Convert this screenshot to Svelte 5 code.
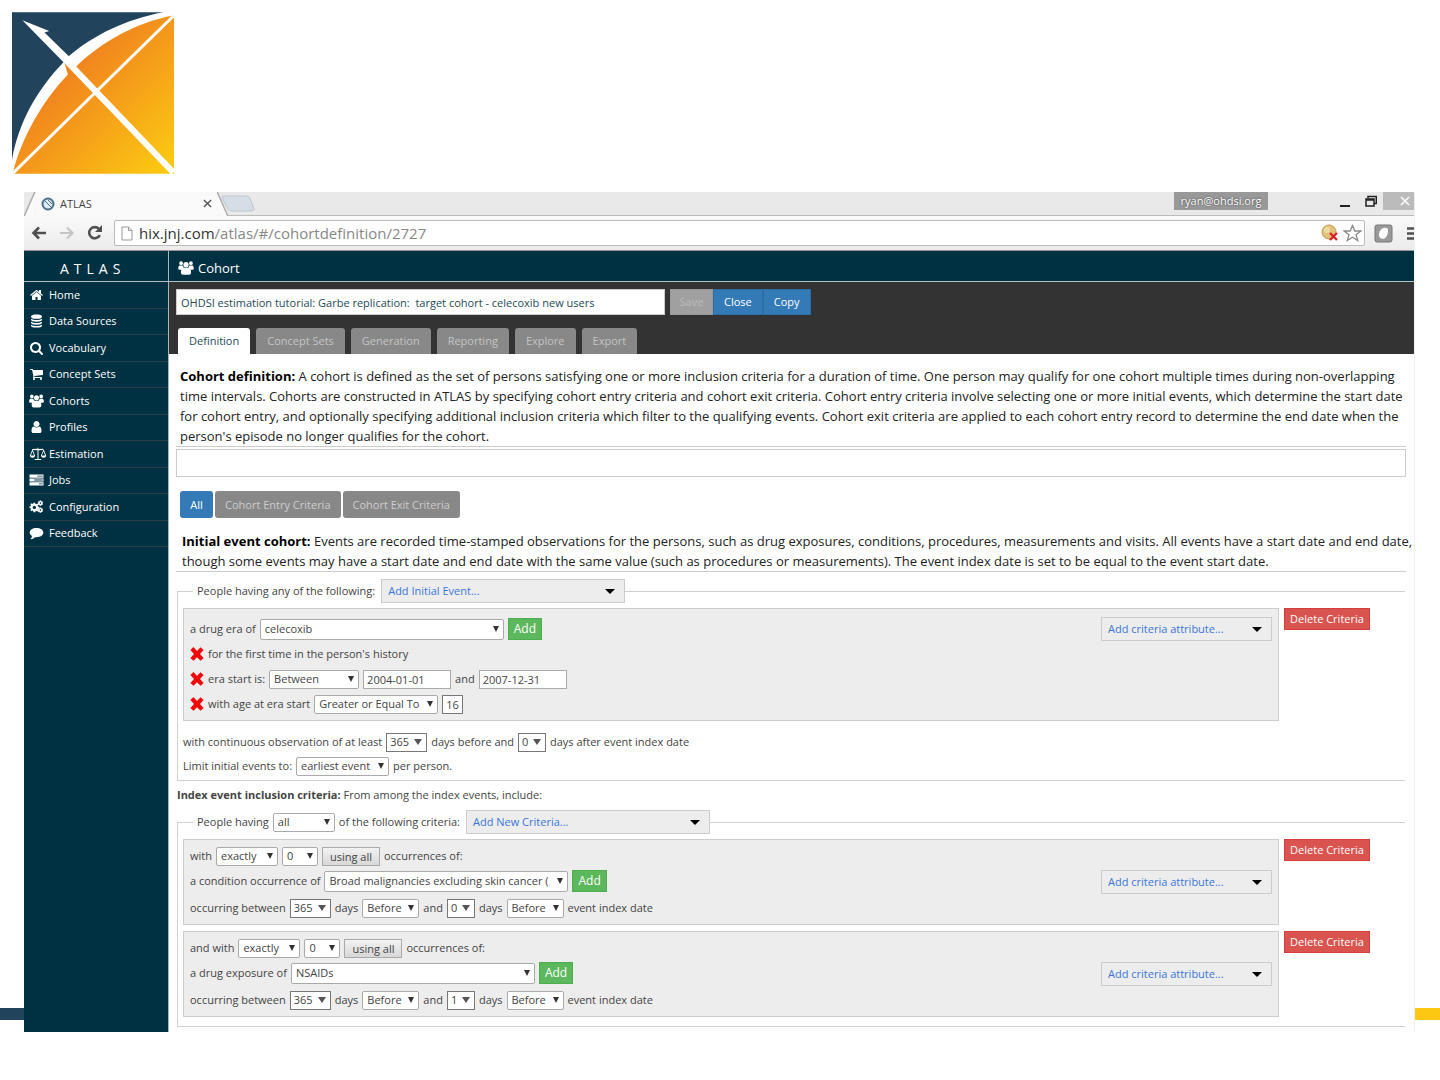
<script>
  const groupIcon =
    'M1.200 2.500a2.200 2.200 0 1 1 4.400 0 2.200 2.200 0 0 1-4.400 0zM12.400 2.500a2.200 2.200 0 1 1 4.400 0 2.200 2.200 0 0 1-4.400 0zM6 4.200a3 3 0 1 1 6 0 3 3 0 0 1-6 0zM1.500 5.200H5L6.400 7.600H11.600L13 5.200H16.500Q17.900 6 17.900 8.500 17.900 10 16.500 10H14.400Q14.800 11.500 14.800 13 14.800 15.800 12.400 15.800H5.600Q3.200 15.800 3.200 13 3.200 11.500 3.600 10H1.500Q.1 10 .1 8.500.1 6 1.500 5.200z';

  const menu = [
    { label: 'Home', box: '0 0 1792 1792', d: 'M1472 992v480q0 26-19 45t-45 19h-384v-384h-256v384h-384q-26 0-45-19t-19-45v-480q0-1 .5-3t.5-3l575-474 575 474q1 2 1 6zm223-69l-62 74q-8 9-21 11h-3q-13 0-21-7l-692-577-692 577q-12 8-24 7-13-2-21-11l-62-74q-8-10-7-23.500t11-21.500l719-599q32-26 76-26t76 26l244 204v-195q0-14 9-23t23-9h192q14 0 23 9t9 23v408l219 182q10 8 11 21.500t-7 23.500z' },
    { label: 'Data Sources', box: '0 0 18 18', d: 'M2 3.500C2 1.500 5 .8 9 .8s7 .7 7 2.700-3 2.700-7 2.700-7-.7-7-2.700zM2 6q2 1.600 7 1.600T16 6v1.500q0 2.500-7 2.500T2 7.500zM2 10q2 1.600 7 1.600t7-1.600v1.300q0 2.500-7 2.500t-7-2.500zM2 13.800q2 1.600 7 1.600t7-1.600v1.200q0 2.500-7 2.500T2 15z' },
    { label: 'Vocabulary', box: '0 0 1792 1792', d: 'M1216 832q0-185-131.500-316.500t-316.500-131.500-316.500 131.500-131.500 316.500 131.500 316.500 316.500 131.500 316.500-131.500 131.500-316.500zm512 832q0 52-38 90t-90 38q-54 0-90-38l-343-342q-179 124-399 124-143 0-273.500-55.500t-225-150-150-225-55.500-273.500 55.500-273.500 150-225 225-150 273.500-55.500 273.500 55.500 225 150 150 225 55.500 273.500q0 220-124 399l343 343q37 37 37 90z' },
    { label: 'Concept Sets', box: '0 0 1792 1792', d: 'M704 1536q0 52-38 90t-90 38-90-38-38-90 38-90 90-38 90 38 38 90zm896 0q0 52-38 90t-90 38-90-38-38-90 38-90 90-38 90 38 38 90zm128-1088v512q0 24-16.500 42.500t-40.500 21.500l-1044 122q13 60 13 70 0 16-24 64h920q26 0 45 19t19 45-19 45-45 19h-1024q-26 0-45-19t-19-45q0-11 8-31.500t16-36 21.500-40 15.500-29.500l-177-823h-204q-26 0-45-19t-19-45 19-45 45-19h256q16 0 28.500 6.500t19.500 15.500 13 24.500 8 26 5.500 29.500 4.500 26h1201q26 0 45 19t19 45z' },
    { label: 'Cohorts', box: '0 0 18 16', d: groupIcon },
    { label: 'Profiles', box: '0 0 1792 1792', d: 'M1536 1399q0 109-62.500 187t-150.500 78h-854q-88 0-150.500-78t-62.500-187q0-85 8.500-160.500t31.500-152 58.500-131 94-89 134.500-34.500q131 128 313 128t313-128q76 0 134.500 34.500t94 89 58.500 131 31.500 152 8.500 160.500zm-256-887q0 159-112.500 271.500t-271.500 112.500-271.500-112.500-112.500-271.500 112.500-271.500 271.500-112.500 271.500 112.500 112.500 271.500z' },
    { label: 'Estimation', box: '0 0 20 17', wide: true, d: 'M9.500 1h1v1.300L16 2v1L17 3l3 7.500q-.4 2.500-3.200 2.500t-3.200-2.500L16.400 3.500 10.600 3.800V14.500H14v1.200H6v-1.200h3.400V3.800L3.800 3.500l2.700 7Q6.100 13 3.300 13T.1 10.500L3 3.400V2.400l6.500-.2zM3.300 5.200L1.300 10.300h4zM16.700 5.200l-2 5.100h4z' },
    { label: 'Jobs', box: '0 0 18 18', d: 'M0 2h18v4H0zM10 3.500v1h7v-1zM0 7h18v4H0zM6 8.500v1h11v-1zM0 12h18v4H0zM12 13.500v1h5v-1z' },
    { label: 'Configuration', box: '0 0 18 18', d: 'M5.200 3.500h2l.4 1.500 1 .4 1.400-.8 1.300 1.300-.8 1.400.4 1 1.500.4v2l-1.500.4-.4 1 .8 1.300-1.300 1.400-1.400-.8-1 .4-.4 1.500h-2L4.800 14l-1-.4-1.400.8L1.100 13l.8-1.300-.4-1L0 10.300v-2l1.500-.4.4-1-.8-1.400L2.400 4.200l1.400.8 1-.4zM6.200 7.300a2.200 2.200 0 1 0 0 4.400 2.200 2.200 0 0 0 0-4.400zM14 .5l1 .2.3 1.200 1.200-.2.8 1.300-.7 1 .7 1-.8 1.400-1.200-.3-.3 1.200h-2l-.3-1.200-1.200.3L10.700 5l.7-1-.7-1 .8-1.300 1.200.2.300-1.200zM14 3a1 1 0 1 0 0 2 1 1 0 0 0 0-2zM14 9.500l1 .2.3 1.200 1.200-.2.8 1.300-.7 1 .7 1-.8 1.400-1.200-.3-.3 1.200h-2l-.3-1.200-1.200.3-.8-1.400.7-1-.7-1 .8-1.300 1.200.2.300-1.200zM14 12a1 1 0 1 0 0 2 1 1 0 0 0 0-2z' },
    { label: 'Feedback', box: '0 0 18 18', d: 'M9 2.500c5 0 8.800 2.600 8.800 6s-3.800 6-8.800 6q-1 0-1.800-.1Q4.700 16.800 1.800 17q-.6-.3-.1-.8Q3 15 3.200 13 .2 11.300.2 8.500c0-3.400 3.800-6 8.800-6z' },
  ];

  const tabs = ['Definition', 'Concept Sets', 'Generation', 'Reporting', 'Explore', 'Export'];

  const criteria = [
    { lead: 'with', count: '0', kind: 'a condition occurrence of', concept: 'Broad malignancies excluding skin cancer (', from: '365', to: '0' },
    { lead: 'and with', count: '0', kind: 'a drug exposure of', concept: 'NSAIDs', from: '365', to: '1' },
  ];
</script>

{#snippet pick(value, label, size, variant = '')}
  <span class="pick {size} {variant}">
    <select aria-label={label}><option>{value}</option></select>
  </span>
{/snippet}

{#snippet adder(text, size)}
  <button class="adder {size}" aria-haspopup="menu"><span>{text}</span><i class="caret"></i></button>
{/snippet}

{#snippet cross(name)}
  <button class="remove" aria-label={name}>
    <svg viewBox="0 0 14 14"><path d="M3.500 0L7 4 10.500.3 13.600 3 10 7l3.600 4-3 2.700L7 10.200 3.500 13.800.4 11 4 7 .4 3z" /></svg>
  </button>
{/snippet}

<div class="slide">
  <header class="brand">
    <svg class="logo" viewBox="36 38 484 483" role="img" aria-label="OHDSI">
      <defs>
        <linearGradient id="sun" gradientUnits="userSpaceOnUse" x1="190" y1="190" x2="500" y2="500">
          <stop offset="0" stop-color="#f0801f" />
          <stop offset="1" stop-color="#fcc812" />
        </linearGradient>
      </defs>
      <path fill="#21435c" d="M36 38H488C380 58 280 105 205 170L190 188C110 270 55 370 36 480z" />
      <path fill="url(#sun)" d="M38 520C65 410 130 300 203 224L192 188 228 200C300 130 400 70 520 47V521H38z" />
      <path stroke="#fff" stroke-width="9" d="M36 522L522 46" />
      <path fill="#fff" d="M67 62L147 94 133 99 206 170 228 200 524 510 512 524 190 188z" />
    </svg>
  </header>

  <div class="stage">
    <div class="bar navy"></div>

    <div class="window">
      <div class="tabstrip">
        <svg class="slope" viewBox="0 0 12 25"><path class="face" d="M0 25L11 0H12V25z" /><path class="edge" d="M0 25L11 0" /></svg>
        <div class="page-tab">
          <svg class="favicon" viewBox="0 0 14 14"><circle cx="7" cy="7" r="5.500" fill="#dfe9f0" stroke="#48708c" stroke-width="2" /><path d="M3 3l8 8M7 3l4 4" stroke="#48708c" /></svg>
          <span>ATLAS</span>
          <button class="plain" aria-label="Close tab"><svg viewBox="0 0 10 10" width="9" height="9"><path d="M1 1l8 8M9 1L1 9" stroke="#555" stroke-width="1.600" /></svg></button>
        </div>
        <svg class="slope" viewBox="0 0 12 25"><path class="face" d="M0 0L11 25H0z" /><path class="edge" d="M0 0L11 25" /></svg>
        <button class="plain newtab-btn" aria-label="New tab"><svg class="newtab" viewBox="0 0 34 17"><path d="M2 1H26Q28 1 29 3L33 14Q33 16 31 16H10Q8 16 7 14L1 3Q1 1 2 1z" fill="#d5dde7" stroke="#c2c6cc" /></svg></button>
        <span class="account">ryan@ohdsi.org</span>
        <div class="winbtns">
          <button class="plain" aria-label="Minimize"><svg viewBox="0 0 12 14"><path d="M1 12H11" stroke="#222" stroke-width="2" /></svg></button>
          <button class="plain" aria-label="Restore"><svg viewBox="0 0 12 14"><path d="M1 5H9V12H1zM1 6H9M3 4V2.500H11.300V9.500H9" fill="none" stroke="#222" stroke-width="1.500" /></svg></button>
        </div>
        <button class="plain winclose" aria-label="Close window"><svg viewBox="0 0 10 10" width="10" height="10"><path d="M1 1l8 8M9 1L1 9" stroke="#fff" stroke-width="1.500" /></svg></button>
      </div>

      <div class="toolbar">
        <button class="plain" aria-label="Back"><svg width="16" height="14" viewBox="0 0 16 14"><path d="M15 7H3M8 1.500L2.500 7 8 12.500" fill="none" stroke="#505050" stroke-width="2.600" /></svg></button>
        <button class="plain" aria-label="Forward"><svg width="16" height="14" viewBox="0 0 16 14"><path d="M1 7H13M8 1.500L13.500 7 8 12.500" fill="none" stroke="#c6c6c6" stroke-width="2.200" /></svg></button>
        <button class="plain" aria-label="Reload"><svg width="16" height="16" viewBox="0 0 16 16"><path d="M12.800 10.200A5.600 5.600 0 1 1 12 4" fill="none" stroke="#505050" stroke-width="2.600" /><path d="M15 0V7H8z" fill="#505050" /></svg></button>
        <div class="address">
          <svg width="12" height="15" viewBox="0 0 12 15"><path d="M1 1H7.500L11 4.500V14H1zM7.500 1V4.500H11" fill="#fff" stroke="#999" /></svg>
          <a href="#/cohortdefinition/2727"><b>hix.jnj.com</b>/atlas/#/cohortdefinition/2727</a>
          <svg width="18" height="18" viewBox="0 0 18 18"><circle cx="8" cy="8" r="7" fill="#e2c17a" stroke="#c29a4e" /><circle cx="6" cy="6" r="3" fill="#f0dba6" /><path d="M9 9l7 7M16 9l-7 7" stroke="#d8232a" stroke-width="2.400" /></svg>
          <button class="plain" aria-label="Bookmark"><svg width="19" height="18" viewBox="0 0 19 18"><path d="M9.500 1.500L11.800 7H17.800L13 10.800 14.800 16.600 9.500 13.200 4.200 16.600 6 10.800 1.200 7H7.200z" fill="#fff" stroke="#8a8a8a" stroke-width="1.300" /></svg></button>
        </div>
        <button class="plain" aria-label="Extension"><svg width="19" height="19" viewBox="0 0 19 19"><rect x="1" y="1" width="17" height="17" rx="2" fill="#999" stroke="#777" /><path d="M9.500 4Q14.500 3 14 7.500 13 15 8.500 15 4.500 14 5 9.500 6 5 9.500 4z" fill="#fff" /></svg></button>
        <button class="plain menu-btn" aria-label="Menu"><svg width="7" height="13" viewBox="0 0 7 13"><path d="M0 1.500H7M0 6.500H7M0 11.500H7" stroke="#505050" stroke-width="2.400" /></svg></button>
      </div>

      <div class="app">
        <aside>
          <div class="wordmark">ATLAS</div>
          <nav>
            {#each menu as item}
              <a href="#/{item.label}">
                <svg class:wide={item.wide} viewBox={item.box}><path fill-rule={item.label === 'Cohorts' ? 'nonzero' : 'evenodd'} d={item.d} /></svg>
                <span>{item.label}</span>
              </a>
            {/each}
          </nav>
        </aside>

        <main>
          <h1><svg viewBox="0 0 18 16"><path d={groupIcon} /></svg>Cohort</h1>

          <div class="head">
            <div class="title-row">
              <input class="title" aria-label="Cohort name" value="OHDSI estimation tutorial: Garbe replication:  target cohort - celecoxib new users" />
              <div class="actions">
                <button class="save" disabled>Save</button>
                <button>Close</button>
                <button>Copy</button>
              </div>
            </div>
            <div class="tabs" role="tablist">
              {#each tabs as tab, i}
                <button role="tab" aria-selected={i === 0} class:active={i === 0}>{tab}</button>
              {/each}
            </div>
          </div>

          <div class="content">
            <p class="intro">
              <strong>Cohort definition:</strong> A cohort is defined as the set of persons satisfying one or more inclusion criteria for a duration of time. One person may qualify for one cohort multiple times during non-overlapping<br />
              time intervals. Cohorts are constructed in ATLAS by specifying cohort entry criteria and cohort exit criteria. Cohort entry criteria involve selecting one or more initial events, which determine the start date<br />
              for cohort entry, and optionally specifying additional inclusion criteria which filter to the qualifying events. Cohort exit criteria are applied to each cohort entry record to determine the end date when the<br />
              person's episode no longer qualifies for the cohort.
            </p>
            <input class="description" aria-label="Description" />

            <div class="pills">
              <button class="on">All</button>
              <button>Cohort Entry Criteria</button>
              <button>Cohort Exit Criteria</button>
            </div>

            <p class="intro event">
              <strong>Initial event cohort:</strong> Events are recorded time-stamped observations for the persons, such as drug exposures, conditions, procedures, measurements and visits. All events have a start date and end date,<br />
              though some events may have a start date and end date with the same value (such as procedures or measurements). The event index date is set to be equal to the event start date.
            </p>

            <fieldset class="initial">
              <legend><span>People having any of the following:</span>{@render adder('Add Initial Event...', 'event-size')}</legend>
              <div class="entry">
                <div class="panel">
                  <div class="rows">
                    <div class="row">a drug era of {@render pick('celecoxib', 'Drug era', 'w-concept')}<button class="add">Add</button></div>
                    <div class="row">{@render cross('Remove first time')}for the first time in the person's history</div>
                    <div class="row">{@render cross('Remove era start')}era start is: {@render pick('Between', 'Era start', 'w-between')}<input class="date" aria-label="From date" value="2004-01-01" /> and <input class="date" aria-label="To date" value="2007-12-31" /></div>
                    <div class="row">{@render cross('Remove age')}with age at era start {@render pick('Greater or Equal To', 'Age operator', 'w-operator')}<input class="age" aria-label="Age" value="16" /></div>
                  </div>
                  {@render adder('Add criteria attribute...', 'attr-size')}
                </div>
                <button class="delete">Delete Criteria</button>
              </div>
              <div class="limits">
                <div class="row">with continuous observation of at least {@render pick('365', 'Days before', 'w-days', 'combo')} days before and {@render pick('0', 'Days after', 'w-day', 'combo')} days after event index date</div>
                <div class="row">Limit initial events to: {@render pick('earliest event', 'Event limit', 'w-limit')} per person.</div>
              </div>
            </fieldset>

            <p class="inclusion"><strong>Index event inclusion criteria:</strong> From among the index events, include:</p>

            <fieldset class="included">
              <legend><span>People having</span>{@render pick('all', 'Match', 'w-all')}<span>of the following criteria:</span>{@render adder('Add New Criteria...', 'event-size')}</legend>
              {#each criteria as c}
                <div class="entry">
                  <div class="panel occurrence">
                    <div class="rows">
                      <div class="row">{c.lead} {@render pick('exactly', 'Comparison', 'w-exactly')}{@render pick(c.count, 'Count', 'w-count')}<button class="using">using all</button> occurrences of:</div>
                      <div class="row">{c.kind} {@render pick(c.concept, 'Concept set', 'w-concept')}<button class="add">Add</button></div>
                      <div class="row">occurring between {@render pick(c.from, 'Start days', 'w-days', 'combo')} days {@render pick('Before', 'Start side', 'w-before')} and {@render pick(c.to, 'End days', 'w-day', 'combo')} days {@render pick('Before', 'End side', 'w-before')} event index date</div>
                    </div>
                    {@render adder('Add criteria attribute...', 'attr-size')}
                  </div>
                  <button class="delete">Delete Criteria</button>
                </div>
              {/each}
            </fieldset>
          </div>
        </main>
      </div>
    </div>

    <div class="bar gold"></div>
  </div>
</div>

<style>
  :global(body) { background: #fff; }
  * { box-sizing: border-box; }
  .slide {
    min-height: 100vh;
    padding-bottom: 48px;
    font-family: "Open Sans", "Noto Sans", sans-serif;
    font-size: 11px;
    line-height: 16px;
    color: #444;
  }
  button, input, select { font: inherit; color: inherit; margin: 0; border-radius: 0; }
  svg { display: block; flex: none; }
  p, h1 { margin: 0; }
  .brand { padding: 12px 12px 18px; }
  .logo { width: 162px; height: 162px; }
  .stage { display: grid; grid-template-columns: 24px minmax(0, 1fr) 25px; }
  .bar { align-self: end; height: 12px; margin-bottom: 12px; }
  .navy { background: #21435c; }
  .gold { background: #fcc812; }
  .window { border-right: 1px solid #f0f0f0; overflow: hidden; }

  .plain { border: 0; padding: 0; background: none; display: flex; align-items: center; justify-content: center; }
  .tabstrip { display: flex; align-items: center; height: 24px; background: #e9e9e9; border-bottom: 1px solid #bbb; font-size: 12px; }
  .slope { width: 12px; height: 24px; }
  .face { fill: #fafafa; }
  .edge { fill: none; stroke: #aaa; stroke-width: 1.5; }
  .page-tab { display: flex; align-items: center; gap: 5px; width: 181px; height: 24px; padding: 0 5px; background: #fafafa; color: #444; font-size: 11px; }
  .page-tab .plain { margin-left: auto; }
  .favicon { width: 14px; height: 14px; }
  .newtab-btn { margin-left: -8px; }
  .newtab { width: 34px; height: 17px; }
  .account { margin-left: auto; margin-right: 67px; align-self: start; width: 94px; height: 18px; line-height: 17px; text-align: center; background: #999; color: #fff; text-shadow: 0 0 2px #333; font-size: 11px; }
  .winbtns { display: flex; gap: 14px; align-self: start; padding: 2px 6px 0 4px; }
  .winbtns svg { width: 12px; height: 14px; }
  .winclose { align-self: start; width: 31px; height: 18px; background: #bbb; padding-left: 12px; }
  .toolbar { display: flex; align-items: center; gap: 12px; height: 35px; padding-left: 7px; background: linear-gradient(#fafafa, #ebebeb); border-bottom: 1px solid #999; }
  .address { flex: 1; display: flex; align-items: center; gap: 4px; height: 26px; margin: 0 -3px 0 -1px; padding: 0 2px 0 6px; background: #fff; border: 1px solid #bbb; border-radius: 2px; }
  .address a { flex: 1; padding-left: 2px; font-size: 15px; line-height: 20px; color: #888; text-decoration: none; }
  .address b { font-weight: 400; color: #333; }
  .menu-btn { margin-left: 2px; }

  .app { display: grid; grid-template-columns: 144px minmax(0, 1fr); }
  aside { background: #003142; }
  .wordmark { height: 31px; padding-left: 36px; border-bottom: 1px solid #b4c2c8; color: #fff; font-size: 14px; line-height: 35px; letter-spacing: 5px; }
  nav { display: grid; grid-auto-rows: 1fr; height: 265px; }
  nav a { display: flex; align-items: center; gap: 5px; padding-left: 5px; border-bottom: 1px solid #2c3e46; color: #fff; font-size: 11px; text-decoration: none; }
  nav svg { width: 15px; height: 14px; fill: #fff; }
  nav svg.wide { width: 18px; margin-right: -3px; }
  main { border-left: 1px solid #a9b7bd; min-width: 0; }
  h1 { display: flex; align-items: center; gap: 4px; height: 31px; padding: 3px 0 0 9px; background: #003142; border-bottom: 1px solid #b4c2c8; color: #fff; font-size: 13px; font-weight: 400; }
  h1 svg { width: 16px; height: 14px; fill: #fff; }

  .head { background: #333; padding: 7px 7px 0; }
  .title-row { display: flex; gap: 5px; align-items: center; }
  .title { width: 489px; height: 26px; padding: 0 4px; border: 1px solid #ccc; background: #fff; color: #244b57; }
  .actions { display: flex; }
  .actions button { height: 26px; padding: 0 10px; border: 1px solid #2e6da4; background: #337ab7; color: #fff; }
  .actions .save { width: 43px; padding: 0; background: #a0a0a0; border-color: #999; color: #bbb; }
  .tabs { display: flex; gap: 6px; padding: 13px 0 0 2px; }
  .tabs button { height: 26px; padding: 0 11px; border: 0; border-radius: 3px 3px 0 0; background: #888; color: #c4c4c4; }
  .tabs .active { background: #fff; color: #244b57; }

  .content { padding: 12px 8px 5px 7px; }
  .intro { padding: 0 0 0 4px; border-bottom: 1px solid #ccc; font-size: 13px; line-height: 20px; color: #222; white-space: nowrap; }
  .intro strong { color: #000; }
  .description { display: block; width: 100%; height: 28px; margin: 2px 0 14px; border: 1px solid #ccc; background: #fff; }
  .pills { display: flex; gap: 2px; padding: 0 0 13px 4px; }
  .pills button { height: 27px; padding: 0 10px; border: 0; border-radius: 3px; background: #888; color: #ccc; }
  .pills .on { width: 33px; background: #337ab7; color: #fff; }
  .event { padding-left: 6px; }

  fieldset { min-width: 0; margin: 0 1px; padding: 0 0 9px 5px; border: solid #d0d0d0; border-width: 1px 0 1px 1px; }
  .initial { margin-top: 7px; padding-bottom: 2px; }
  legend { display: flex; align-items: center; gap: 4px; margin-left: 10px; padding: 0 0 0 4px; }
  legend .adder { margin-left: 2px; }
  .adder { display: flex; align-items: center; justify-content: space-between; height: 24px; padding: 0 9px 0 6px; border: 1px solid #ccc; background: #ededed; color: #3a76d8; white-space: nowrap; }
  .event-size { width: 244px; }
  .attr-size { width: 171px; }
  .caret { border: 5px solid transparent; border-top-color: #000; border-bottom-width: 0; }
  .entry { display: flex; align-items: flex-start; gap: 5px; padding-right: 35px; margin-top: 6px; }
  legend + .entry { margin-top: 5px; }
  .panel { flex: 1; display: flex; align-items: flex-start; justify-content: space-between; padding: 8px 6px 4px; border: 1px solid #ccc; background: #ededed; }
  .occurrence { align-items: center; padding: 4px 6px; }
  .occurrence .row:last-child { margin-top: 2px; }
  .rows { display: grid; gap: 1px; }
  .row { display: flex; align-items: center; gap: 4px; height: 24px; white-space: nowrap; }
  .limits { padding: 9px 0 0; }
  .inclusion { padding: 6px 0 7px 1px; }

  .pick { display: inline-grid; align-items: center; }
  .pick select { grid-area: 1 / 1; appearance: none; width: 100%; height: 19px; padding: 0 4px; border: 1px solid #aaa; border-radius: 2px; background: #fff; line-height: 16px; }
  .pick::after { content: ''; grid-area: 1 / 1; justify-self: end; margin-right: 5px; border: 3px solid transparent; border-top: 6px solid #333; border-bottom-width: 0; pointer-events: none; }
  .combo select { border-color: #777; border-radius: 0; padding: 0 3px; }
  .combo::after { border-width: 6px 4px 0; border-top-color: #555; }
  .w-concept { width: 244px; }
  .w-concept select { height: 21px; }
  .w-between { width: 90px; }
  .w-operator { width: 124px; }
  .w-days { width: 41px; }
  .w-day { width: 28px; }
  .w-limit { width: 93px; }
  .w-all { width: 62px; }
  .w-exactly { width: 62px; }
  .w-count { width: 36px; }
  .w-before { width: 57px; }
  .date, .age { width: 88px; height: 19px; padding: 0 3px; border: 1px solid #aaa; background: #fff; }
  .age { width: 21px; border-color: #777; }
  .add, .delete { height: 22px; padding: 0 5px; border: 1px solid #4cae4c; background: #5cb85c; color: #fff; font-size: 12px; line-height: 18px; }
  .delete { width: 86px; padding: 0; border-color: #d43f3a; background: #d9534f; font-size: 11px; }
  .using { height: 19px; padding: 0 7px; border: 1px solid #aaa; background: linear-gradient(#f2f2f2, #d8d8d8); line-height: 15px; }
  .remove { padding: 0; border: 0; background: none; }
  .remove svg { width: 14px; height: 14px; fill: #f00808; }
</style>
